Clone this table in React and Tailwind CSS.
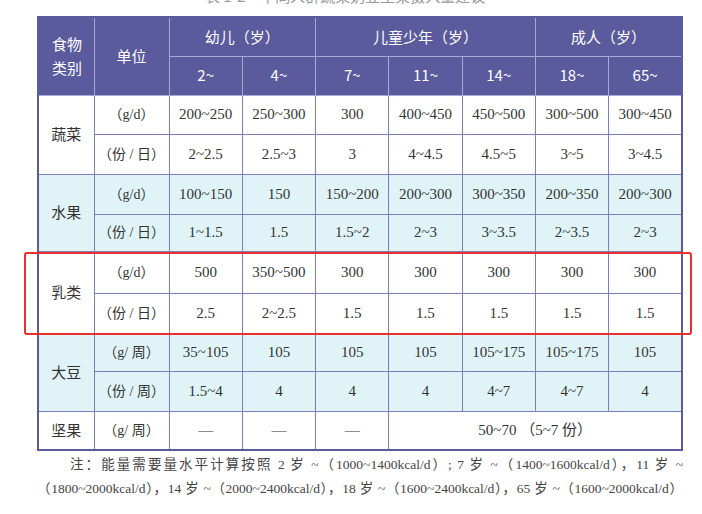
const serif = "font-['Liberation_Serif','Noto_Sans_CJK_SC',serif]";
const sans = "font-['Noto_Sans_CJK_SC','Liberation_Sans',sans-serif]";

const ages = ['2~', '4~', '7~', '11~', '14~', '18~', '65~'];

const groups = [
  {
    name: '蔬菜',
    tint: false,
    rows: [
      { unit: '（g/d）', h: 'h-[39px]', vals: ['200~250', '250~300', '300', '400~450', '450~500', '300~500', '300~450'] },
      { unit: '（份 / 日）', h: 'h-[40px]', vals: ['2~2.5', '2.5~3', '3', '4~4.5', '4.5~5', '3~5', '3~4.5'] },
    ],
  },
  {
    name: '水果',
    tint: true,
    rows: [
      { unit: '（g/d）', h: 'h-[40px]', vals: ['100~150', '150', '150~200', '200~300', '300~350', '200~350', '200~300'] },
      { unit: '（份 / 日）', h: 'h-[37px]', vals: ['1~1.5', '1.5', '1.5~2', '2~3', '3~3.5', '2~3.5', '2~3'] },
    ],
  },
  {
    name: '乳类',
    tint: false,
    rows: [
      { unit: '（g/d）', h: 'h-[42px]', vals: ['500', '350~500', '300', '300', '300', '300', '300'] },
      { unit: '（份 / 日）', h: 'h-[40px]', vals: ['2.5', '2~2.5', '1.5', '1.5', '1.5', '1.5', '1.5'] },
    ],
  },
  {
    name: '大豆',
    tint: true,
    rows: [
      { unit: '（g/ 周）', h: 'h-[38px]', vals: ['35~105', '105', '105', '105', '105~175', '105~175', '105'] },
      { unit: '（份 / 周）', h: 'h-[40px]', vals: ['1.5~4', '4', '4', '4', '4~7', '4~7', '4'] },
    ],
  },
];

function HeadCell({ children, className = '', ...rest }) {
  return (
    <th
      {...rest}
      className={`border border-[#a7a8d6] bg-[#5a5a9d] text-white font-normal text-[15px] ${sans} ${className}`}
    >
      {children}
    </th>
  );
}

function Cell({ children, className = '', ...rest }) {
  return (
    <td {...rest} className={`border border-[#7b7fc0] text-center text-[#333] ${className}`}>
      {children}
    </td>
  );
}

export default function App() {
  return (
    <div className="relative w-[702px] h-[514px] overflow-hidden bg-white">
      {/* caption, mostly above the crop */}
      <div className={`-mt-[12px] h-[16px] pl-[205px] text-[15px] leading-[16px] text-[#9a9a9a] ${sans}`}>
        表 1-2　不同人群蔬果奶豆坚果摄入量建议
      </div>

      <div className="pl-[37px] pt-[12px]">
        <table className="w-[646px] table-fixed border-collapse border-2 border-[#5a5a9d]">
          <colgroup>
            <col className="w-[56px]" />
            <col className="w-[75px]" />
            {ages.map((a) => (
              <col key={a} />
            ))}
          </colgroup>
          <thead>
            <tr className="h-[39px]">
              <HeadCell rowSpan={2} className="text-left pl-[13px] leading-[24px]">
                食物<br />类别
              </HeadCell>
              <HeadCell rowSpan={2}>单位</HeadCell>
              <HeadCell colSpan={2}>幼儿（岁）</HeadCell>
              <HeadCell colSpan={3}>儿童少年（岁）</HeadCell>
              <HeadCell colSpan={2}>成人（岁）</HeadCell>
            </tr>
            <tr className="h-[39px]">
              {ages.map((a) => (
                <HeadCell key={a}>{a}</HeadCell>
              ))}
            </tr>
          </thead>
          <tbody className={`${serif} text-[15px]`}>
            {groups.map((g) =>
              g.rows.map((r, i) => (
                <tr key={g.name + i} className={`${r.h} ${g.tint ? 'bg-[#e0f4f8]' : 'bg-white'}`}>
                  {i === 0 && (
                    <Cell rowSpan={2} className={`text-[15px] ${sans}`}>
                      {g.name}
                    </Cell>
                  )}
                  <Cell className="text-[14px]">{r.unit}</Cell>
                  {r.vals.map((v, k) => (
                    <Cell key={k}>{v}</Cell>
                  ))}
                </tr>
              ))
            )}
            <tr className="h-[39px] bg-white">
              <Cell className={`text-[15px] ${sans}`}>坚果</Cell>
              <Cell className="text-[14px]">（g/ 周）</Cell>
              <Cell>—</Cell>
              <Cell>—</Cell>
              <Cell>—</Cell>
              <Cell colSpan={4}>50~70 （5~7 份）</Cell>
            </tr>
          </tbody>
        </table>
      </div>

      {/* note */}
      <div className={`w-[646px] ml-[37px] mt-[2px] text-[13.5px] leading-[24px] text-[#444] ${serif}`}>
        <p className="pl-[33px] text-justify [text-align-last:justify]">
          注：能量需要量水平计算按照 2 岁 ~（1000~1400kcal/d）; 7 岁 ~（1400~1600kcal/d），11 岁 ~
        </p>
        <p className="text-justify [text-align-last:justify]">
          （1800~2000kcal/d），14 岁 ~（2000~2400kcal/d），18 岁 ~（1600~2400kcal/d），65 岁 ~（1600~2000kcal/d）
        </p>
      </div>

      {/* highlight around dairy rows */}
      <div className="absolute left-[24px] top-[252px] w-[668px] h-[83px] rounded-[3px] border-2 border-[#e8302c] pointer-events-none" />
    </div>
  );
}
